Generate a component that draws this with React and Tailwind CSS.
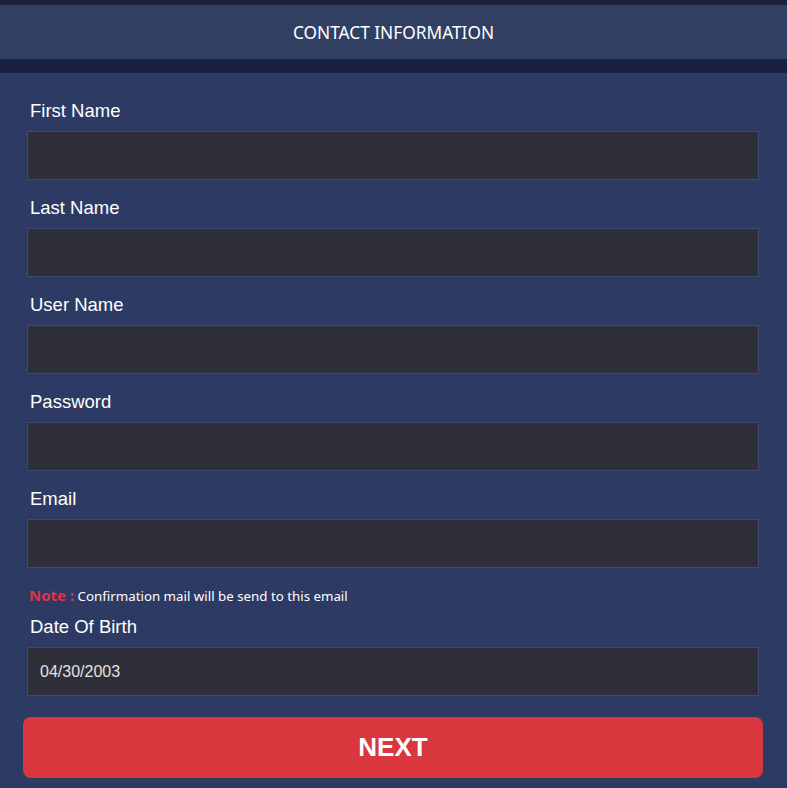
export default function App() {
  const fields = ["First Name", "Last Name", "User Name", "Password", "Email"];
  const label = "block text-[18.5px] leading-[24px] text-white pt-[1px] mb-[8px] pl-[3px]";
  const input =
    "block w-full h-[49px] bg-[#2e2f38] border border-[#3c4a70] outline-none px-3 text-[16px] text-[#e2e2e2]";
  return (
    <div className="w-[787px] h-[788px] bg-[#2d3a63] overflow-hidden" style={{ fontFamily: '"Liberation Sans", Arial, sans-serif' }}>
      <div className="h-[5px] bg-[#1a1f3d]" />
      <div
        className="h-[54px] pt-[2px] bg-[#313f63] flex items-center justify-center text-white text-[17.3px]"
        style={{ fontFamily: '"Noto Sans", sans-serif' }}
      >
        CONTACT INFORMATION
      </div>
      <div className="h-[14px] bg-[#1a2040]" />
      <div className="pt-[25px] pl-[27px] pr-[28px]">
        {fields.map((f, i) => (
          <div key={f} className={i === 0 ? "" : "mt-[15px]"}>
            <label className={label}>{f}</label>
            <div className={input} />
          </div>
        ))}
        <div
          className="mt-[15px] leading-[24px] text-[13.3px] text-white pl-[2px]"
          style={{ fontFamily: '"Noto Sans", sans-serif' }}
        >
          <span className="text-[#dc3545] font-bold text-[15px]">Note :</span> Confirmation mail will be send to this email
        </div>
        <div className="mt-[6px]">
          <label className={label}>Date Of Birth</label>
          <div className={input + " flex items-center"}>04/30/2003</div>
        </div>
        <button className="mt-[21px] -ml-[4px] w-[740px] h-[61px] rounded-[8px] bg-[#d9363e] text-white font-bold text-[26px] flex items-center justify-center">
          NEXT
        </button>
      </div>
    </div>
  );
}
